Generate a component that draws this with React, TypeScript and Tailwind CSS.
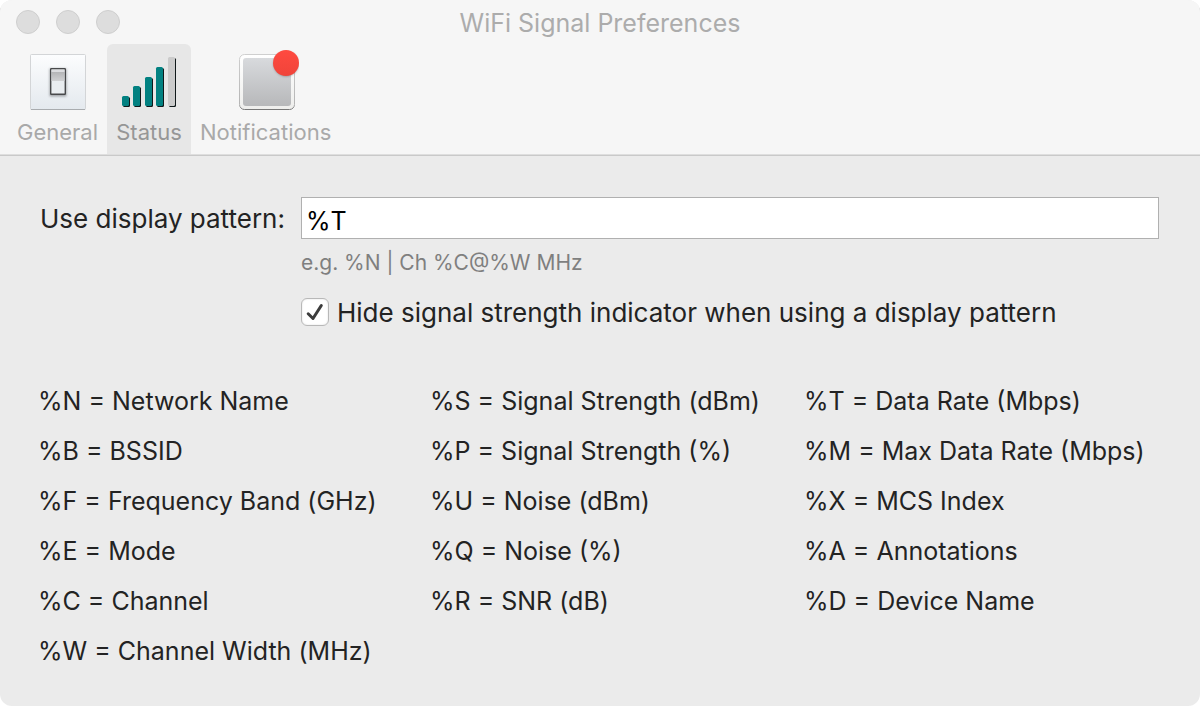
import { useState } from "react";
import type { ReactNode } from "react";

const codes: string[][] = [
  [
    "%N = Network Name",
    "%B = BSSID",
    "%F = Frequency Band (GHz)",
    "%E = Mode",
    "%C = Channel",
    "%W = Channel Width (MHz)",
  ],
  [
    "%S = Signal Strength (dBm)",
    "%P = Signal Strength (%)",
    "%U = Noise (dBm)",
    "%Q = Noise (%)",
    "%R = SNR (dB)",
  ],
  [
    "%T = Data Rate (Mbps)",
    "%M = Max Data Rate (Mbps)",
    "%X = MCS Index",
    "%A = Annotations",
    "%D = Device Name",
  ],
];

function SwitchIcon() {
  return (
    <svg viewBox="0 0 64 64" className="size-16" aria-hidden="true">
      <defs>
        <linearGradient id="plate" x1="0" y1="0" x2="0" y2="1">
          <stop offset="0" stopColor="#fcfdfe" />
          <stop offset="1" stopColor="#e4e9ee" />
        </linearGradient>
        <linearGradient id="rocker" x1="0" y1="0" x2="0" y2="1">
          <stop offset="0" stopColor="#b4b5b7" />
          <stop offset="1" stopColor="#d0d1d3" />
        </linearGradient>
        <filter id="rockerGlow" x="-50%" y="-50%" width="200%" height="200%">
          <feGaussianBlur stdDeviation="1" />
        </filter>
      </defs>
      <rect x="4.5" y="4.5" width="55" height="55" rx="1" fill="url(#plate)" stroke="#d3d5d7" />
      <path d="M5 59.5h54" stroke="#a9acaf" />
      <rect x="23.5" y="18.5" width="17" height="28" rx="1" fill="#8c8f93" opacity=".8" filter="url(#rockerGlow)" />
      <rect x="24.7" y="18.7" width="14.6" height="25.6" rx=".6" fill="#e9edf0" stroke="#48494b" strokeWidth="1.4" />
      <path d="M25.5 19.5h13v2.5h-13z" fill="#dcdde0" />
      <path d="M25.5 22h13v9h-13z" fill="url(#rocker)" />
    </svg>
  );
}

const bars = [
  { x: 15, y: 46, height: 10 },
  { x: 26, y: 36, height: 20 },
  { x: 38, y: 27, height: 29 },
  { x: 49, y: 17, height: 39 },
  { x: 61, y: 7, height: 49 },
];

function SignalIcon() {
  return (
    <svg viewBox="0 0 84 64" className="h-16 w-21" aria-hidden="true">
      {bars.map((bar, i) => (
        <g key={bar.x}>
          <rect x={bar.x + 1} y={bar.y + 1} width="7" height={bar.height} rx="1.5" fill="#10191a" />
          <rect x={bar.x} y={bar.y} width="7" height={bar.height} rx="1.5" fill={i === 4 ? "#cbcbcb" : "#028181"} />
        </g>
      ))}
    </svg>
  );
}

function BadgeIcon() {
  return (
    <svg viewBox="0 0 66 64" className="h-16 w-[66px]" aria-hidden="true">
      <defs>
        <linearGradient id="frame" x1="0" y1="0" x2="0" y2="1">
          <stop offset="0" stopColor="#ffffff" />
          <stop offset="1" stopColor="#eeeeec" />
        </linearGradient>
        <linearGradient id="frameEdge" x1="0" y1="0" x2="0" y2="1">
          <stop offset="0" stopColor="#cfcfcf" />
          <stop offset=".9" stopColor="#b5b5b5" />
          <stop offset="1" stopColor="#777777" />
        </linearGradient>
        <linearGradient id="panel" x1="0" y1="0" x2="0" y2="1">
          <stop offset="0" stopColor="#d8dadd" />
          <stop offset="1" stopColor="#b7b8ba" />
        </linearGradient>
        <linearGradient id="dot" x1="0" y1="0" x2="0" y2="1">
          <stop offset="0" stopColor="#ff4a40" />
          <stop offset="1" stopColor="#f0443a" />
        </linearGradient>
        <filter id="dotShadow" x="-30%" y="-30%" width="160%" height="160%">
          <feGaussianBlur stdDeviation="1" />
        </filter>
      </defs>
      <rect x="6.5" y="4.5" width="55" height="55" rx="5" fill="url(#frame)" stroke="url(#frameEdge)" />
      <rect x="10" y="8" width="48" height="48" rx="3" fill="url(#panel)" />
      <circle cx="53" cy="14" r="12.5" fill="#555" opacity=".5" filter="url(#dotShadow)" />
      <circle cx="53" cy="13" r="13" fill="url(#dot)" />
    </svg>
  );
}

function Tab({ label, icon, selected = false }: { label: string; icon: ReactNode; selected?: boolean }) {
  return (
    <button
      type="button"
      role="tab"
      aria-selected={selected}
      className={
        selected
          ? "flex flex-col items-center rounded-t-md bg-[#e7e7e7] px-2 pt-1.5 pb-1 text-[#969696]"
          : "flex flex-col items-center px-[9px] pt-1.5 pb-1 text-[#a9a9a9]"
      }
    >
      <span className="-mx-2 flex">{icon}</span>
      <span className="text-[22px] leading-9">{label}</span>
    </button>
  );
}

export default function App() {
  const [pattern, setPattern] = useState("%T");
  const [hidden, setHidden] = useState(true);

  return (
    <main className="flex min-h-screen flex-col overflow-hidden rounded-xl bg-[#ebebeb] font-['Inter','Liberation_Sans',sans-serif] text-[25px] leading-[30px] text-[#232323]">
      <header className="border-b border-[#dedede] bg-[#f6f6f6] shadow-[0_1px_0_#c9c9c9]">
        <div className="grid h-11 grid-cols-[1fr_auto_1fr] items-center px-4">
          <div className="flex gap-4">
            <button type="button" aria-label="Close" className="size-6 rounded-full border border-[#cecece] bg-[#dddddd]" />
            <button type="button" aria-label="Minimize" className="size-6 rounded-full border border-[#cecece] bg-[#dddddd]" />
            <button type="button" aria-label="Zoom" className="size-6 rounded-full border border-[#cecece] bg-[#dddddd]" />
          </div>
          <h1 className="pt-0.5 text-[#acacac]">WiFi Signal Preferences</h1>
        </div>
        <div role="tablist" className="flex px-2">
          <Tab label="General" icon={<SwitchIcon />} />
          <Tab label="Status" icon={<SignalIcon />} selected />
          <Tab label="Notifications" icon={<BadgeIcon />} />
        </div>
      </header>

      <section className="pt-[42px] pr-[41px] pl-10">
        <div className="grid grid-cols-[auto_1fr] gap-x-4 text-[26px]">
          <label htmlFor="pattern" className="self-center pt-0.5">
            Use display pattern:
          </label>
          <input
            id="pattern"
            type="text"
            value={pattern}
            onChange={(e) => setPattern(e.target.value)}
            className="h-[42px] w-full border border-[#b0b0b0] bg-white px-1 pt-1.5 text-[25px] text-black outline-none"
          />
          <p className="col-start-2 pt-[9px] text-[21px] text-[#7f7f7f]">e.g. %N | Ch %C@%W MHz</p>
          <div className="col-start-2 flex items-center gap-2 pt-[18px]">
            <span className="relative flex">
              <input
                id="hide"
                type="checkbox"
                checked={hidden}
                onChange={(e) => setHidden(e.target.checked)}
                className="size-7 appearance-none rounded-md border border-[#b8b8b8] bg-white shadow-[inset_0_0_2px_#dddddd]"
              />
              {hidden && (
                <svg viewBox="0 0 28 28" className="pointer-events-none absolute inset-0 size-7" aria-hidden="true">
                  <path d="M7.2 15.8 12 20.5 20.3 7.5" fill="none" stroke="#3c3c3c" strokeWidth="3" strokeLinecap="round" strokeLinejoin="round" />
                </svg>
              )}
            </span>
            <label htmlFor="hide" className="pt-0.5">
              Hide signal strength indicator when using a display pattern
            </label>
          </div>
        </div>
      </section>

      <section className="grid grid-cols-[392fr_374fr_354fr] pt-12 pr-[42px] pb-6 pl-[38px]">
        {codes.map((column) => (
          <ul key={column[0]}>
            {column.map((code) => (
              <li key={code} className="leading-[50px] whitespace-nowrap">
                {code}
              </li>
            ))}
          </ul>
        ))}
      </section>
    </main>
  );
}
